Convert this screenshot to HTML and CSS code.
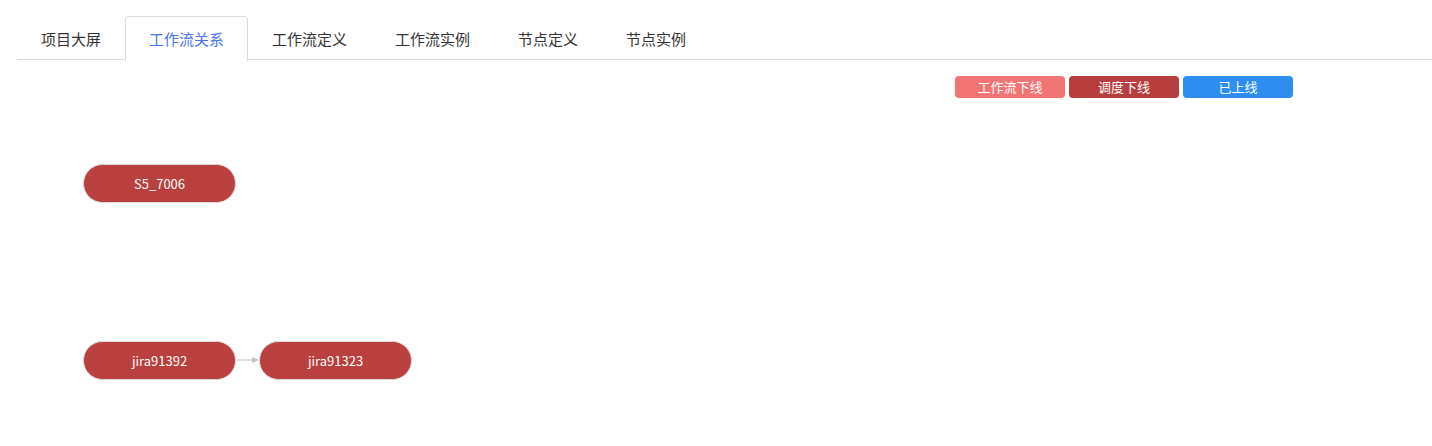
FILE: index.html
```html
<!DOCTYPE html>
<html lang="zh">
  <head>
    <meta charset="UTF-8" />
    <meta name="viewport" content="width=device-width, initial-scale=1.0" />
    <title>工作流关系</title>
    <link rel="stylesheet" href="styles.css">
  </head>
  <body>
    <!-- Onglets -->
    <div class="tabs">
      <div class="tab">项目大屏</div>
      <div class="tab active">工作流关系</div>
      <div class="tab">工作流定义</div>
      <div class="tab">工作流实例</div>
      <div class="tab">节点定义</div>
      <div class="tab">节点实例</div>
    </div>

    <!-- Légende -->
    <div class="legend">
      <span class="tag tag-off">工作流下线</span>
      <span class="tag tag-sched">调度下线</span>
      <span class="tag tag-on">已上线</span>
    </div>

    <!-- Graphe -->
    <div class="graph">
      <svg class="edges" width="1432" height="320">
        <line x1="237" y1="262" x2="252" y2="262" stroke="#c4c4c4" stroke-width="1" />
        <polygon points="252,259 259,262 252,265" fill="#c4c4c4" />
      </svg>
      <div class="node" style="left: 83px; top: 66px">S5_7006</div>
      <div class="node" style="left: 83px; top: 243px">jira91392</div>
      <div class="node" style="left: 259px; top: 243px">jira91323</div>
    </div>
  </body>
</html>
```

FILE: styles.css
```css
body {
  margin: 0;
  font-family: "Noto Sans CJK SC", "Open Sans", sans-serif;
  background: #fff;
  color: #333;
}
.tabs {
  display: flex;
  margin: 16px 0 0 17px;
  border-bottom: 1px solid #dcdcdc;
  height: 43px;
}
.tab {
  padding: 0 23px;
  border: 1px solid transparent;
  border-bottom: none;
  font-size: 15px;
  line-height: 43px;
  height: 43px;
  color: #333;
}
.tab.active {
  border-color: #dcdcdc;
  border-radius: 4px 4px 0 0;
  background: #fff;
  color: #4677f0;
  height: 44px;
  margin-bottom: -1px;
}
.legend {
  display: flex;
  justify-content: flex-end;
  gap: 4px;
  padding-right: 139px;
  margin-top: 16px;
}
.tag {
  width: 110px;
  height: 22px;
  line-height: 22px;
  border-radius: 4px;
  color: #fff;
  font-size: 13px;
  text-align: center;
}
.tag-off {
  background: #f27474;
}
.tag-sched {
  background: #b83e3e;
}
.tag-on {
  background: #2e8def;
}
.graph {
  position: relative;
  height: 320px;
}
.edges {
  position: absolute;
  left: 0;
  top: 0;
}
.node {
  position: absolute;
  width: 151px;
  height: 37px;
  line-height: 37px;
  border: 1px solid #d9d9d9;
  border-radius: 20px;
  background: #ba4040;
  color: #fff;
  font-size: 13px;
  text-align: center;
}
```
